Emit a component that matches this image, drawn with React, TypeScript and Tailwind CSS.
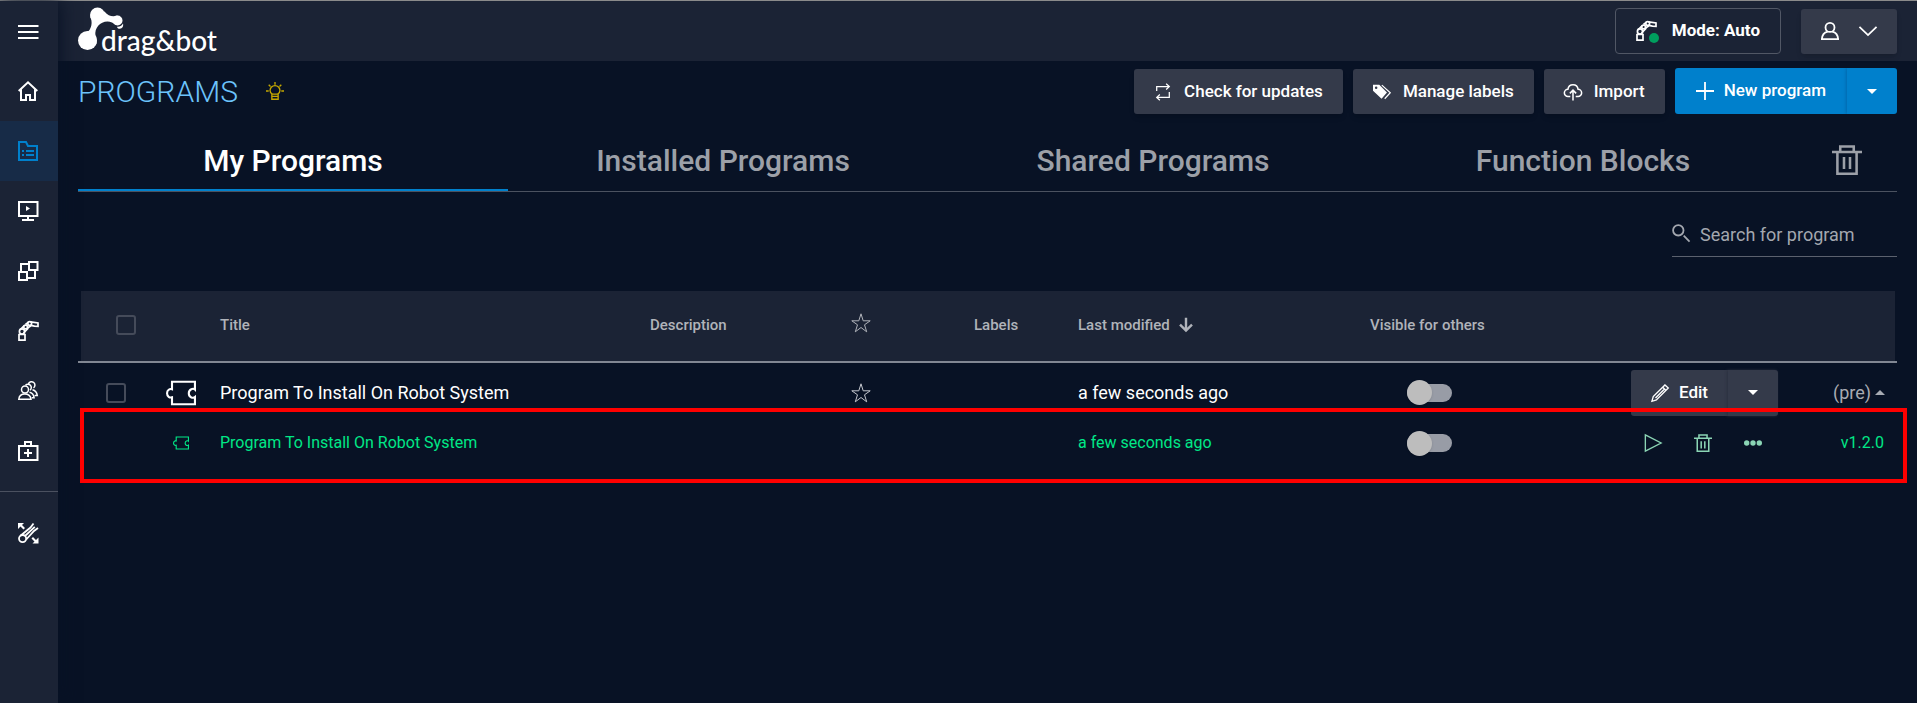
import { useState } from "react";
import type { ReactNode } from "react";

// All line icons share a 20x20 grid and inherit their colour from the text colour.
function Icon({
  children,
  className = "size-5",
  width = 2,
}: {
  children: ReactNode;
  className?: string;
  width?: number;
}) {
  return (
    <svg
      aria-hidden
      viewBox="0 0 20 20"
      fill="none"
      stroke="currentColor"
      strokeWidth={width}
      className={`shrink-0 overflow-visible ${className}`}
    >
      {children}
    </svg>
  );
}

const MenuIcon = () => (
  <Icon>
    <path d="M0 5h20.500M0 11h20.500M0 17h20.500" />
  </Icon>
);

const HomeIcon = () => (
  <Icon>
    <path d="M.7 10 10 1.300 19.300 10M3 8v11h5v-5h4v5h5V8" />
  </Icon>
);

const ProgramsIcon = () => (
  <Icon>
    <path d="M1 1h7l2 4h9v14H1zM4 10h2M8 10h8M4 14h2M8 14h8" />
  </Icon>
);

const MonitorIcon = () => (
  <Icon>
    <path d="M1 1h18.500v14H1zM10 15v3M4 19h12" />
    <path d="M8 5v5l4-2.500z" fill="currentColor" stroke="none" />
  </Icon>
);

const BlocksIcon = () => (
  <Icon>
    <path d="M3 10V3h7M17 10v7h-7M11 1h8.500v8H11zM1 11h8v8H1z" />
  </Icon>
);

const RobotIcon = () => (
  <Icon width={1.700}>
    <path d="M1 13.500h6v5.700H1z" />
    <circle cx="4" cy="10.500" r="2.600" />
    <path d="M2.300 8.500 6 4.800M5.600 12l4.600-4.800" />
    <circle cx="7.600" cy="6" r="1.900" />
    <path d="m7.500 3.500 3-2.300M9.500 7l3.500-2.300" />
    <circle cx="11.700" cy="2.500" r="1.900" />
    <path d="M12.500.9 20 2v3.300l-3.500-.2-3.700-.8" />
  </Icon>
);

const UsersIcon = () => (
  <Icon width={1.500}>
    <circle cx="7" cy="8.500" r="3.500" />
    <path d="M.8 18.200c.3-3.200 2.200-5.200 6-5.200s5.800 2 6.200 5.200z" />
    <path d="M7.500 4.200a3.400 3.400 0 1 1 4.600 5M10.500 2.600a3.400 3.400 0 1 1 5 4.300" />
    <path d="M11.500 11.200c2.700.5 4.200 2.500 4.600 5.600h-2.400M14.500 8.800c2.700.7 4.400 2.800 4.800 5.800h-2.600" />
  </Icon>
);

const CaseIcon = () => (
  <Icon>
    <path d="M1 5h18.500v14H1zM7 5V1h6v4M6 12h8M10 8v8" />
  </Icon>
);

const ToolsIcon = () => (
  <Icon width={1.800}>
    <path
      d="M0 0h6L4 2l3 3-1.500 1.500-3-3L0 6zM20.500 20.500h-6l2-2-3-3 1.500-1.500 3 3 2.500-2.500z"
      fill="currentColor"
      stroke="none"
    />
    <circle cx="4.600" cy="15.600" r="3.600" />
    <path d="M2.800 12.500 12.500 4.500l3-4M8.200 16.500 16 8l4-3M16.800 3.800 7 13" />
  </Icon>
);

const TrashIcon = ({ className }: { className?: string }) => (
  <Icon className={className} width={1.700}>
    <path d="M0 4.600h20M5.500 4.600V1h9v3.600M3.600 4.600v14.500h12.800V4.600M8 8v8M12 8v8" />
  </Icon>
);

const PuzzleIcon = ({ className }: { className?: string }) => (
  <Icon className={className} width={1.400}>
    <path d="M4 2.500h15.300v5.200c-1-.9-4.100-.6-4.100 2.500s3.100 3.400 4.100 2.500v4.800H4v-4.600C2.500 13.400.7 12.400.7 10.200S2.500 7 4 7.500z" />
  </Icon>
);

const StarIcon = () => (
  <Icon width={1}>
    <path d="m10 .8 2.200 7h7l-5.700 4 2.200 7-5.700-4.300-5.700 4.300 2.200-7-5.700-4h7z" />
  </Icon>
);

function Caret({ up = false }: { up?: boolean }) {
  return (
    <svg aria-hidden viewBox="0 0 10 5" fill="currentColor" className="h-[5px] w-[10px] shrink-0">
      <path d={up ? "M0 5h10L5 0z" : "M0 0h10L5 5z"} />
    </svg>
  );
}

function Logo() {
  return (
    <a href="#home" aria-label="drag&bot" className="flex h-[60px] items-start text-white">
      <svg aria-hidden viewBox="0 0 46 44" fill="currentColor" className="mt-[6px] h-[44px] w-[46px] shrink-0">
        <circle cx="9.500" cy="33.500" r="9.500" />
        <circle cx="19.500" cy="8" r="7.500" />
        <circle cx="39.500" cy="13.500" r="5" />
        <path d="M12.200 9.500c2.300 5.500 1.600 9.500-.7 13.500-1 1.500-3.500 2-6 3l11.500 13c3-3 1.500-6.500.5-10-1.300-8 4.500-14.500 12-14.500 3 0 6 1.200 8.500 3.500l1.500-9.400c-5 1.700-9 .5-13-4.100z" />
        <path d="M45 16.500c.7 3-.9 5-3.100 5.300-1.600.1-2.700-.8-3-2.100 2.600.4 4.600-.8 6.100-3.200z" />
      </svg>
      <span className="-ml-[23px] mt-6 font-[Lato,sans-serif] text-[28px] leading-[30px] font-medium">
        drag&amp;bot
      </span>
    </a>
  );
}

const NAV = [
  { label: "Home", icon: <HomeIcon /> },
  { label: "Programs", icon: <ProgramsIcon />, active: true },
  { label: "Runtime", icon: <MonitorIcon /> },
  { label: "Components", icon: <BlocksIcon /> },
  { label: "Robots", icon: <RobotIcon /> },
  { label: "Users", icon: <UsersIcon /> },
  { label: "Support", icon: <CaseIcon /> },
];

function Sidebar() {
  return (
    <nav className="z-10 flex w-[58px] shrink-0 flex-col bg-[#1b2335] text-white shadow-[2px_0_16px_#081225]">
      <button type="button" aria-label="Menu" className="flex h-[60px] items-center pl-[18px]">
        <MenuIcon />
      </button>
      {NAV.map((item) => (
        <a
          key={item.label}
          href={`#${item.label.toLowerCase()}`}
          aria-label={item.label}
          className={`flex h-[60px] items-center pl-[18px] ${
            item.active ? "bg-[#172b47] text-[#0080cc]" : ""
          }`}
        >
          {item.icon}
        </a>
      ))}
      <hr className="mt-[10px] border-[#4b5160]" />
      <a href="#tools" aria-label="Tools" className="mt-[11px] flex h-[60px] items-center pl-[18px]">
        <ToolsIcon />
      </a>
    </nav>
  );
}

function TopBar() {
  return (
    <header className="flex h-[60px] items-center justify-between bg-[#1b2335] px-5">
      <Logo />
      <div className="flex items-center gap-5">
        <button
          type="button"
          className="flex h-[46px] items-center gap-4 rounded-[4px] border border-[#515765] px-5 text-[17px] font-bold"
        >
          <span className="relative">
            <RobotIcon />
            <span className="absolute -right-[3px] -bottom-[2px] size-[10px] rounded-full bg-[#009e5e]" />
          </span>
          Mode: Auto
        </button>
        <button
          type="button"
          aria-label="Account"
          className="flex h-[45px] items-center gap-5 rounded-[3px] bg-[#343a4a] px-5 shadow-md"
        >
          <Icon className="size-[18px]">
            <circle cx="10" cy="6" r="5" />
            <path d="M1 19c.2-4.500 3-7.500 6.500-8.300M19 19c-.2-4.500-3-7.500-6.500-8.300M0 19h20" />
          </Icon>
          <Icon className="size-[18px]">
            <path d="m.5 5.500 9.500 9 9.500-9" />
          </Icon>
        </button>
      </div>
    </header>
  );
}

function ToolButton({ icon, children }: { icon: ReactNode; children: ReactNode }) {
  return (
    <button
      type="button"
      className="flex h-[45px] items-center gap-3 rounded-[3px] bg-[#343a4a] px-5 text-[17px] font-medium shadow-md"
    >
      {icon}
      {children}
    </button>
  );
}

function PageHeading() {
  return (
    <div className="flex items-start justify-between pt-[7px]">
      <div className="flex h-[46px] items-center gap-[28px]">
        <h1 className="pt-[2px] text-[30px] leading-[44px] font-light text-[#6cc3fb]">PROGRAMS</h1>
        <Icon className="size-[18px] text-[#c5a800]" width={1.500}>
          <path d="M10 0v3M0 10h3M17 10h3M3 3l2 2M17 3l-2 2M7 13.500c-2-1.300-2.500-2.500-2.500-4a5.500 5.500 0 0 1 11 0c0 1.500-.5 2.700-2.500 4zM6.500 13.500h7v5.700h-7zM6.500 16h7" />
        </Icon>
      </div>
      <div className="flex items-end gap-[10px]">
        <ToolButton
          icon={
            <Icon className="size-[18px]" width={1.400}>
              <path d="M3 9V4h14M13.500.8 17 4l-3.500 3.200M17 10v6H3M6.500 12.800 3 16l3.500 3.200" />
            </Icon>
          }
        >
          Check for updates
        </ToolButton>
        <ToolButton
          icon={
            <Icon className="size-[18px]" width={1.300}>
              <path
                d="M0 2h7l8.500 8.500L9.500 17.500 0 8.500zM3.500 3.800a1.400 1.400 0 1 0 0 2.800 1.400 1.400 0 0 0 0-2.800z"
                fill="currentColor"
                fillRule="evenodd"
                stroke="none"
              />
              <path d="m9.800 2.300 9.400 8.500-6.200 6.700" />
            </Icon>
          }
        >
          Manage labels
        </ToolButton>
        <ToolButton
          icon={
            <Icon className="size-[18px]" width={1.700}>
              <path d="M7 15H4.500a4 4 0 0 1-.2-8c1-6.800 10.400-6.800 11.400 0a4 4 0 0 1-.2 8H13M10 19.500V8M6.500 11.500 10 8l3.500 3.500" />
            </Icon>
          }
        >
          Import
        </ToolButton>
        <div className="flex h-[46px] overflow-hidden rounded-[3px] bg-[#0080cc] text-[17px] font-medium">
          <button type="button" className="flex items-center gap-[10px] px-[21px]">
            <Icon className="size-[18px]">
              <path d="M10 0v20M0 10h20" />
            </Icon>
            New program
          </button>
          <button
            type="button"
            aria-label="More ways to create a program"
            className="flex w-[50px] items-center justify-center shadow-[0_0_4px_#00599a]"
          >
            <Caret />
          </button>
        </div>
      </div>
    </div>
  );
}

const TABS = ["My Programs", "Installed Programs", "Shared Programs", "Function Blocks"];

function Tabs() {
  const [current, setCurrent] = useState(TABS[0]);
  return (
    <div role="tablist" className="mt-[17px] flex h-[61px] border-b border-[#4b5260]">
      {TABS.map((tab) => (
        <button
          key={tab}
          type="button"
          role="tab"
          aria-selected={tab === current}
          onClick={() => setCurrent(tab)}
          className={`flex-1 border-b-2 pt-[2px] text-[30px] leading-[56px] font-medium ${
            tab === current ? "border-[#0080cc] text-white" : "border-transparent text-[#9ca0a8]"
          }`}
        >
          {tab}
        </button>
      ))}
      <button
        type="button"
        role="tab"
        aria-selected={false}
        aria-label="Deleted programs"
        className="flex w-[99px] items-center justify-center pr-[2px] pb-[2px] text-[#9ca0a8]"
      >
        <TrashIcon className="size-[30px]" />
      </button>
    </div>
  );
}

function Toggle({ label }: { label: string }) {
  return (
    <input
      type="checkbox"
      role="switch"
      aria-label={label}
      className="ml-[37px] flex h-[18px] w-[45px] appearance-none items-center rounded-full bg-[#989ca6] before:size-[25px] before:shrink-0 before:rounded-full before:bg-[#bdbdbd] before:shadow-sm"
    />
  );
}

const checkbox = "block size-5 appearance-none rounded-[3px] border-2 border-[#454b5a]";
const action = "flex h-10 w-[50px] items-center justify-center";

function ProgramTable() {
  return (
    <div className="relative mt-[34px]">
      <table className="w-full table-fixed border-collapse text-left">
        <colgroup>
          <col className="w-[75px]" />
          <col className="w-[67px]" />
          <col />
          <col className="w-[196px]" />
          <col className="w-[128px]" />
          <col className="w-[104px]" />
          <col className="w-[292px]" />
          <col className="w-[212px]" />
          <col className="w-[196px]" />
          <col className="w-[119px]" />
        </colgroup>
        <thead>
          <tr className="h-[71px] border-b-2 border-[#818793] text-[15px] text-[#b0b3ba] *:bg-[#1b2335] *:p-0 *:pb-[2px] *:font-medium">
            <th className="bg-[linear-gradient(to_right,#081225_3px,transparent_3px)]">
              <input type="checkbox" aria-label="Select all programs" className={`ml-[38px] ${checkbox}`} />
            </th>
            <th />
            <th scope="col">Title</th>
            <th scope="col">Description</th>
            <th scope="col">
              <button type="button" aria-label="Sort by favourite" className="mb-1 ml-[5px] flex">
                <StarIcon />
              </button>
            </th>
            <th scope="col">Labels</th>
            <th scope="col" aria-sort="descending">
              <button type="button" className="flex items-center gap-2">
                Last modified
                <Icon className="size-4">
                  <path d="M10 1v15M2.500 9.500 10 17l7.500-7.500" strokeWidth={3} />
                </Icon>
              </button>
            </th>
            <th scope="col">Visible for others</th>
            <th />
            <th className="bg-[linear-gradient(to_left,#081225_2px,transparent_2px)]" />
          </tr>
        </thead>
        <tbody className="*:*:p-0">
          <tr className="h-[60px] text-[18px] text-white">
            <td>
              <input
                type="checkbox"
                aria-label="Select Program To Install On Robot System"
                className={`ml-[28px] ${checkbox}`}
              />
            </td>
            <td>
              <PuzzleIcon className="ml-[13px] size-[30px]" />
            </td>
            <td>Program To Install On Robot System</td>
            <td />
            <td>
              <button type="button" aria-label="Add to favourites" className="ml-[5px] flex text-[#c4c7ce]">
                <StarIcon />
              </button>
            </td>
            <td />
            <td>a few seconds ago</td>
            <td>
              <Toggle label="Visible for others" />
            </td>
            <td>
              <div className="flex justify-end text-[17px] font-medium">
                <button type="button" className="flex h-[46px] items-center gap-[10px] rounded-l-[3px] bg-[#343a4a] px-5">
                  <Icon className="size-[18px]" width={1.500}>
                    <path d="M1 19.300 2.500 14 15.500 1l3.700 3.500L6 17.800zM13 3.500l3.700 3.700M5 15.500 15 5.500" />
                  </Icon>
                  Edit
                </button>
                <button
                  type="button"
                  aria-label="More edit options"
                  className="flex h-[46px] w-[50px] items-center justify-center rounded-r-[3px] bg-[#343a4a] shadow-[-1px_0_3px_#2b3140]"
                >
                  <Caret />
                </button>
              </div>
            </td>
            <td>
              <button type="button" aria-expanded className="mr-3 ml-auto flex items-center gap-1 text-[#a8abb3]">
                (pre)
                <Caret up />
              </button>
            </td>
          </tr>
          <tr className="h-[42px] text-[16px] text-[#00e887]">
            <td />
            <td>
              <PuzzleIcon className="ml-5 size-4" />
            </td>
            <td>Program To Install On Robot System</td>
            <td />
            <td />
            <td />
            <td>a few seconds ago</td>
            <td>
              <Toggle label="Version 1.2.0 visible for others" />
            </td>
            <td>
              <div className="flex justify-end text-[#8bd5b5]">
                <button type="button" aria-label="Run" className={action}>
                  <Icon className="size-[18px]" width={1.500}>
                    <path d="M1.500 1v18L19 10z" />
                  </Icon>
                </button>
                <button type="button" aria-label="Delete" className={action}>
                  <TrashIcon className="size-[18px]" />
                </button>
                <button type="button" aria-label="More actions" className={action}>
                  <Icon className="size-[18px]">
                    <g fill="currentColor" stroke="none">
                      <circle cx="3" cy="10" r="3" />
                      <circle cx="10" cy="10" r="3" />
                      <circle cx="17" cy="10" r="3" />
                    </g>
                  </Icon>
                </button>
              </div>
            </td>
            <td className="text-right">
              <span className="pr-[13px]">v1.2.0</span>
            </td>
          </tr>
        </tbody>
      </table>
      {/* marker drawn round the released version */}
      <div
        aria-hidden
        className="pointer-events-none absolute top-[117px] -right-[10px] left-[2px] h-[75px] border-4 border-[#ff0000]"
      />
    </div>
  );
}

export default function App() {
  return (
    <div className="flex min-h-screen border-t border-[#8b8b8b] bg-[#081225] font-[Roboto,sans-serif] text-white">
      <Sidebar />
      <div className="min-w-0 flex-1">
        <TopBar />
        <main className="px-5">
          <PageHeading />
          <Tabs />
          <div className="mt-[21px] flex justify-end">
            <label className="flex h-[44px] w-[225px] items-center gap-[10px] border-b border-[#5b616e] text-[#a3a7af]">
              <Icon className="mb-1 size-[18px]">
                <circle cx="7" cy="7" r="5.800" />
                <path d="m13 13 6.500 6.500" />
              </Icon>
              <input
                type="text"
                aria-label="Search for program"
                placeholder="Search for program"
                className="w-full min-w-0 bg-transparent text-[18px] outline-none placeholder:text-[#a3a7af]"
              />
            </label>
          </div>
          <ProgramTable />
        </main>
      </div>
    </div>
  );
}
